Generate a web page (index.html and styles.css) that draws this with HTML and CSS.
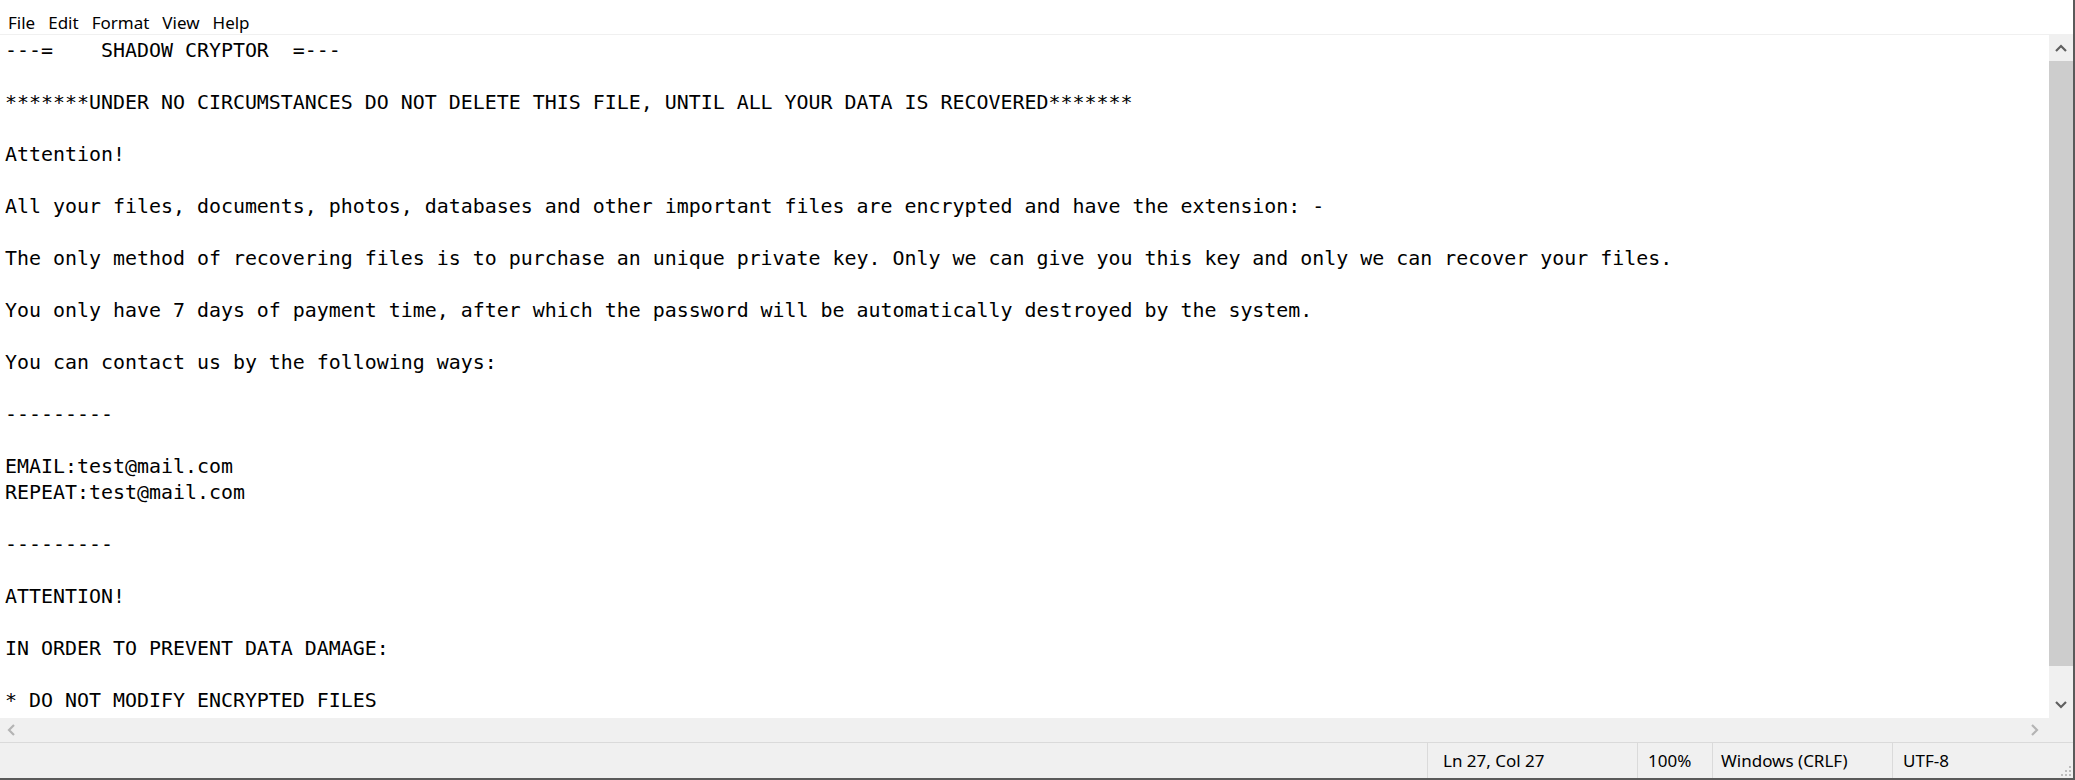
FILE: index.html
```html
<!DOCTYPE html>
<html lang="en">
<head>
    <meta charset="UTF-8">
    <title>README.txt - Notepad</title>
    <link rel="stylesheet" href="styles.css">
</head>
<body>
    <div class="window">
        <div class="menubar">
            <span class="menu-item">File</span>
            <span class="menu-item">Edit</span>
            <span class="menu-item">Format</span>
            <span class="menu-item">View</span>
            <span class="menu-item">Help</span>
        </div>

        <div class="main">
            <pre class="editor">---=    SHADOW CRYPTOR  =---

*******UNDER NO CIRCUMSTANCES DO NOT DELETE THIS FILE, UNTIL ALL YOUR DATA IS RECOVERED*******

Attention!

All your files, documents, photos, databases and other important files are encrypted and have the extension: -

The only method of recovering files is to purchase an unique private key. Only we can give you this key and only we can recover your files.

You only have 7 days of payment time, after which the password will be automatically destroyed by the system.

You can contact us by the following ways:

---------

EMAIL:test@mail.com
REPEAT:test@mail.com

---------

ATTENTION!

IN ORDER TO PREVENT DATA DAMAGE:

* DO NOT MODIFY ENCRYPTED FILES
</pre>
            <div class="vscroll">
                <div class="arrow-btn">
                    <svg width="12" height="8" viewBox="0 0 12 8"><path d="M1 7 L6 2 L11 7" fill="none" stroke="#606060" stroke-width="2.2"/></svg>
                </div>
                <div class="thumb"></div>
                <div class="track"></div>
                <div class="arrow-btn">
                    <svg width="12" height="8" viewBox="0 0 12 8"><path d="M1 1 L6 6 L11 1" fill="none" stroke="#606060" stroke-width="2.2"/></svg>
                </div>
            </div>
        </div>

        <div class="hscroll">
            <div class="harrow">
                <svg width="8" height="12" viewBox="0 0 8 12"><path d="M7 1 L2 6 L7 11" fill="none" stroke="#b4b4b4" stroke-width="2.2"/></svg>
            </div>
            <div class="harrow">
                <svg width="8" height="12" viewBox="0 0 8 12"><path d="M1 1 L6 6 L1 11" fill="none" stroke="#b4b4b4" stroke-width="2.2"/></svg>
            </div>
        </div>

        <div class="statusbar">
            <div class="status-cell status-blank"></div>
            <div class="status-cell status-pos">Ln 27, Col 27</div>
            <div class="status-cell status-zoom">100%</div>
            <div class="status-cell status-eol">Windows (CRLF)</div>
            <div class="status-cell status-enc">UTF-8</div>
            <svg class="grip" width="12" height="12" viewBox="0 0 12 12">
                <rect x="9" y="1" width="2" height="2" fill="#bdbdbd"/>
                <rect x="5" y="5" width="2" height="2" fill="#bdbdbd"/>
                <rect x="9" y="5" width="2" height="2" fill="#bdbdbd"/>
                <rect x="1" y="9" width="2" height="2" fill="#bdbdbd"/>
                <rect x="5" y="9" width="2" height="2" fill="#bdbdbd"/>
                <rect x="9" y="9" width="2" height="2" fill="#bdbdbd"/>
            </svg>
        </div>
    </div>
</body>
</html>
```

FILE: styles.css
```css
html, body {
    margin: 0;
    padding: 0;
    background: #fff;
    overflow: hidden;
}
.window {
    width: 2073px;
    height: 778px;
    display: flex;
    flex-direction: column;
    border-right: 2px solid #5a5a5a;
    border-bottom: 2px solid #5a5a5a;
    font-family: "Noto Sans", "Open Sans", sans-serif;
    color: #000;
}
.menubar {
    height: 35px;
    box-sizing: border-box;
    border-bottom: 1px solid #f0f0f0;
    display: flex;
    align-items: center;
    padding-top: 11px;
    font-size: 17px;
}
.menu-item {
    padding: 0 5px 0 8px;
    line-height: 22px;
}
.main {
    flex: 1;
    display: flex;
    min-height: 0;
}
.editor {
    flex: 1;
    margin: 0;
    padding: 3px 0 0 5px;
    font-family: "DejaVu Sans Mono", "Liberation Mono", monospace;
    font-size: 19.93px;
    line-height: 26px;
    color: #000;
    overflow: hidden;
    white-space: pre;
}
.vscroll {
    width: 24px;
    display: flex;
    flex-direction: column;
    background: #f0f0f0;
}
.arrow-btn {
    height: 26px;
    display: flex;
    align-items: center;
    justify-content: center;
}
.thumb {
    height: 605px;
    background: #cdcdcd;
}
.track {
    flex: 1;
}
.hscroll {
    height: 25px;
    box-sizing: border-box;
    background: #f0f0f0;
    border-bottom: 1px solid #dadada;
    display: flex;
    justify-content: space-between;
    align-items: center;
    padding: 0 34px 0 7px;
}
.harrow {
    display: flex;
    align-items: center;
}
.statusbar {
    height: 35px;
    background: #f0f0f0;
    display: flex;
    align-items: stretch;
    font-size: 17px;
    position: relative;
}
.status-cell {
    display: flex;
    align-items: center;
    border-right: 1px solid #dadada;
    box-sizing: border-box;
    white-space: nowrap;
}
.status-blank {
    width: 1428px;
}
.status-pos {
    width: 210px;
    padding-left: 15px;
}
.status-zoom {
    width: 75px;
    padding-left: 10px;
}
.status-eol {
    width: 180px;
    padding-left: 8px;
}
.status-enc {
    flex: 1;
    padding-left: 10px;
    border-right: none;
}
.grip {
    position: absolute;
    right: 1px;
    bottom: 1px;
}
```
